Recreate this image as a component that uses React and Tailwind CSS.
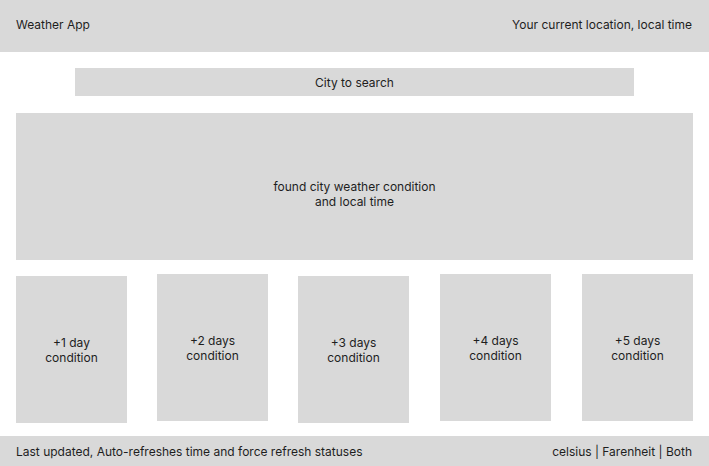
const days = [
  { label: '+1 day', cls: 'mt-[2px]' },
  { label: '+2 days', cls: 'ml-[30px]' },
  { label: '+3 days', cls: 'ml-[30px] mt-[2px]' },
  { label: '+4 days', cls: 'ml-[31px]' },
  { label: '+5 days', cls: 'ml-[31px]' },
]

export default function App() {
  return (
    <div className="w-[709px] h-[466px] bg-white flex flex-col text-[12px] leading-[15px] text-[#1e1e1e] font-['Inter',sans-serif]">
      {/* header */}
      <header className="h-[52px] bg-[#d9d9d9] flex items-center justify-between pl-[16px] pr-[17px] pb-[3px]">
        <span>Weather App</span>
        <span>Your current location, local time</span>
      </header>

      {/* search */}
      <div className="mt-[16px] ml-[75px] w-[559px] h-[28px] bg-[#d9d9d9] flex items-center justify-center">
        City to search
      </div>

      {/* current city */}
      <section className="mt-[17px] mx-[16px] h-[147px] bg-[#d9d9d9] flex flex-col items-center justify-center text-center pt-[14px]">
        <span>found city weather condition</span>
        <span>and local time</span>
      </section>

      {/* forecast */}
      <div className="mt-[14px] ml-[16px] flex items-start">
        {days.map((d) => (
          <div
            key={d.label}
            className={`w-[111px] h-[147px] bg-[#d9d9d9] flex flex-col items-center justify-center text-center ${d.cls}`}
          >
            <span>{d.label}</span>
            <span>condition</span>
          </div>
        ))}
      </div>

      {/* footer */}
      <footer className="mt-auto h-[30px] bg-[#d9d9d9] flex items-center justify-between pl-[16px] pr-[17px]">
        <span>Last updated, Auto-refreshes time and force refresh statuses</span>
        <span>celsius | Farenheit | Both</span>
      </footer>
    </div>
  )
}
